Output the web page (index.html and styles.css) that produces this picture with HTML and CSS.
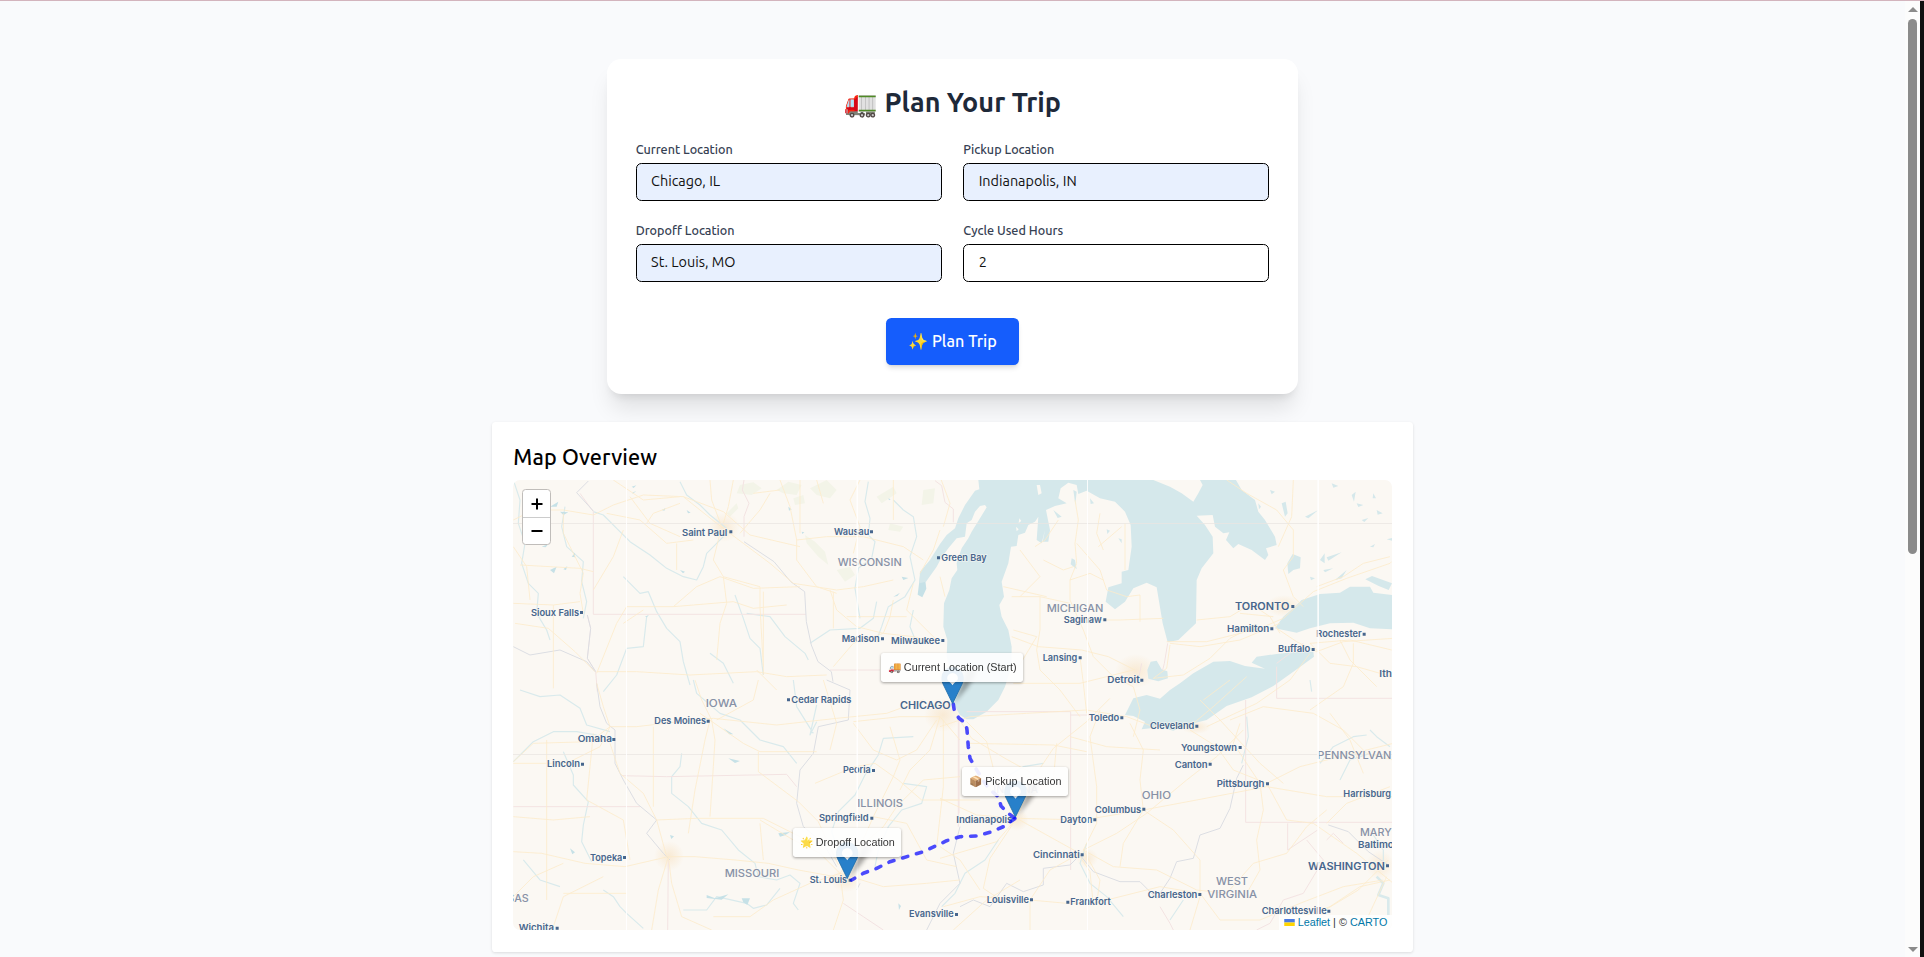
FILE: index.html
```html
<!DOCTYPE html>
<html lang="en">
<head>
<meta charset="utf-8">
<title>Plan Your Trip</title>
<link rel="stylesheet" href="styles.css">
</head>
<body>
<div class="window">
<main class="page">
  <section class="planner">
    <h1 class="planner-title">🚛 Plan Your Trip</h1>
    <form class="fields">
      <label class="field"><span class="field-label">Current Location</span><input class="field-input filled" value="Chicago, IL"></label>
      <label class="field"><span class="field-label">Pickup Location</span><input class="field-input filled" value="Indianapolis, IN"></label>
      <label class="field"><span class="field-label">Dropoff Location</span><input class="field-input filled" value="St. Louis, MO"></label>
      <label class="field"><span class="field-label">Cycle Used Hours</span><input class="field-input" value="2"></label>
    </form>
    <button class="submit" type="button">✨ Plan Trip</button>
  </section>

  <section class="overview">
    <h2 class="overview-title">Map Overview</h2>
    <div class="map">
      <svg class="map-canvas" viewBox="513 480 879 450" preserveAspectRatio="none">
        <defs>
          <symbol id="pin" viewBox="0 0 25 41">
            <path d="M12.500.5C5.600.5.5 6 .5 12.500c0 3 .8 5.200 2 7.500L12.500 40.500 22.500 20c1.200-2.300 2-4.500 2-7.500C24.500 6 19.400.5 12.500.5z" fill="#2880ca" stroke="#2471ad"/>
            <path d="M12.500 6.500a6 6 0 0 1 6 6c0 3-3.500 4-6 7.800-2.500-3.800-6-4.800-6-7.800a6 6 0 0 1 6-6z" fill="#fff"/>
          </symbol>
          <filter id="soft" x="-50%" y="-50%" width="200%" height="200%"><feGaussianBlur stdDeviation="2"/></filter>
          <radialGradient id="sprawl"><stop offset="0" stop-color="#f9ead4"/><stop offset="1" stop-color="#f9ead4" stop-opacity="0"/></radialGradient>
        </defs>
        <rect x="513" y="480" width="879" height="450" fill="#fbf8f3"/>

        <!-- parks -->
        <g transform="translate(480 410) scale(.33333)" class="park">
          <path d="M780 225l40-8 25 18-30 20-45-5zM890 240l35-25 40 10-15 30-40-5zM990 235l50-25 30 30-20 25-40-10zM940 265l30-10 5 25-30 5zM1330 240l35-5-5 45-35 5zM975 375l30 20 30 30 10 40-30-25-35-40zM1070 480l40-10 15 25-30 20zM1190 260l50-30 10 20-45 30z"/>
          <path d="M740 310l30-30 5 15-25 25zM1230 340l40 10-10 15-35-5z"/>
        </g>
        <!-- urban areas -->
        <g class="urban">
          <ellipse cx="724" cy="527" rx="16" ry="15"/><ellipse cx="943" cy="715" rx="19" ry="17"/><ellipse cx="1136" cy="671" rx="21" ry="17"/>
          <ellipse cx="669" cy="856" rx="15" ry="15"/><ellipse cx="846" cy="880" rx="16" ry="12"/><ellipse cx="1017" cy="820" rx="12" ry="11"/><ellipse cx="1284" cy="606" rx="18" ry="11"/>
          <ellipse cx="1380" cy="865" rx="14" ry="15"/><ellipse cx="1196" cy="727" rx="15" ry="7"/><ellipse cx="1087" cy="858" rx="11" ry="10"/>
        </g>

        <!-- rivers and small lakes -->
        <g class="river" transform="translate(480 410) scale(.33333)">
          <path d="M100 210l20 60-5 70 20 60-10 60 20 60 30 30-5 60 30 50 10 30M255 290l-10 60 15 60 50 45-5 60 15 60-10 50"/>
          <path d="M340 305l30 10 40 40 40 40 60 40 50 40 50 25 40 10 20-40 10-40 30-30 20-20M600 215l20 40 40 30 30 30 50 40"/>
          <path d="M430 500l50 50 25-5 25 60 30 50 40 40 10 60 20 70M765 555l25 70 20 60 30 30 10 80M800 610l70 10 45 60 60 50 10 20M1165 215l-10 60 15 50-5 50 20 20-10 50-40 30-10 60 15 90M1240 270l30 30 30 20 10 60-20 60 15 70-30 50-50 30-20 60-15 40"/>
          <path d="M500 620l-10 90-50 5-30 80-40 50M690 730l40 30 30 60M1300 600l-10 50 20 50M1190 575l-10 50-40 30-90 5-60 40"/>
        </g>
        <g class="river" transform="translate(480 680) scale(.33333)">
          <path d="M120 30l60 20 60-5 60 40 20 50 70 20M100 245l60-60 60-30 70 0 60 10M250 215l30 70 0 30 45 50-15 70-5 50 30 60"/>
          <path d="M605 220l-5 40-25 30 0 50 50 40 40 50 60 20 50 60 50 40 10 40 55 10 40-15 30 25-20 60 15 20M610 690l70 0 30-40 90 20 20 15 40-10 40-50"/>
          <path d="M640 0l10 40 70 60 60 20 60 60 70 20 40 50M940 0l10 80 50 80M1300 170l-90 5-15 50-40 60-30 60-50 50-20 60 20 60M1270 310l70 10-15 50-60 20-40 50-30 70-10 50M370 630l30 20 20 30 20 20 50 45M130 540l50 60 60 20M1010 75l-20 90 20-40"/>
        </g>
        <g class="river" transform="translate(940 680) scale(.33333)">
          <path d="M175 480l-40 60-60 40-30 60-40 40M440 490l-20 60 30 60 50 40 50 60M310 250l-60 10-50 30-70 20M920 110l5 60-20 80M1110 0l5 35M1290 150l20 20 40 30M1140 250l40-50 60-30 40-5M1290 450l40 60 0 50M730 660l-40 60M1200 300l30-60 60-20"/>
          <path d="M1310 590l20 20-15 35 30 10 0 50" stroke-width="8"/>
        </g>
        <g class="pond" transform="translate(480 410) scale(.33333)">
          <path d="M210 290l25-15-5 15zM240 305l25 2-15 8zM185 410l20-8-8 10zM210 480l20-10-8 20zM275 440l10-12 0 14zM250 478l12-10-4 12zM455 230l14-4-8 8zM455 250l14-8-8 8zM545 300l12-6-4 8zM620 300l12 8-8 2zM600 480l15 5-6 5zM925 290l10 8-8 4zM965 365l8 2-6 5zM1225 265l7 3-5 3zM495 620l12-6-6 8zM1265 500l20 4-15 6zM1240 560l20-12-8 10zM1320 498l14-2 5 40-12 26-14-8z"/>
        </g>
        <g class="pond" transform="translate(480 680) scale(.33333)">
          <path d="M745 235l35 8-15 6zM895 460l35-4-15 10-15 4zM270 505l15 12-8 6zM570 465l12 4-8 8zM680 645l25 10 40-12-20 16-45-5zM785 655l25 0-8 20-12-8zM1255 670l8 8-6 12zM730 145l30 18-12 0z"/>
        </g>
        <g class="water">
          <path transform="translate(940 470) scale(.33333)" d="M115 30L118 58 105 62 75 105 55 145 45 175 20 195 0 222-30 270-60 305-62 340-42 335-10 290 5 262 25 235 50 205 75 200 80 160 95 150 105 125 120 108 135 105 140 112 120 145 95 185 85 205 65 235 50 280 52 300 35 325 28 360 12 400 10 470 22 510 20 560 35 620 40 700 60 735 80 748 100 748 140 725 175 690 195 650 214 590 215 530 205 480 185 440 178 405 192 380 185 335 205 280 213 230 230 228 235 195 255 188 265 165 285 155 295 140 290 210 305 220 315 180 308 215 325 215 330 180 318 120 345 108 380 100 355 85 362 55 385 38 410 45 415 72 440 62 480 85 525 95 555 125 572 165 575 230 565 300 545 305 545 340 505 352 497 395 525 418 555 395 580 355 620 338 650 352 658 400 668 460 683 517 715 510 768 460 770 330 785 295 820 250 818 200 795 165 770 137 818 135 825 170 850 190 868 187 858 210 880 235 895 222 935 240 975 270 985 255 978 235 1010 225 1005 200 975 150 955 125 945 90 905 60 888 30zM640 30L690 50 725 70 760 95 775 70 788 45 780 30zM290 45l10 0 5 25-10 5zM238 145l6 8-8 6zM228 170l8 8-6 6z" fill-rule="evenodd"/>
          <path transform="translate(940 470) scale(.33333)" d="M632 575L650 572 665 598 682 604 684 625 655 634 625 626 622 600zM555 735L580 685 620 675 660 686 690 660 720 640 760 610 820 575 870 573 915 588 975 596 935 578 950 560 1010 552 1070 545 1120 545 1122 560 1060 605 1000 648 935 682 860 708 800 750 740 765 700 782 660 772 605 778 615 755 580 738zM1005 475L1030 440 1060 415 1085 390 1140 372 1200 368 1230 350 1290 350 1300 368 1356 375 1356 478 1290 475 1240 458 1170 460 1110 475 1070 488zM1045 312L1042 280 1058 252 1082 262 1080 295 1060 300zM1356 340l-60-22-20 10 40 20 30 12z"/>
          <path transform="translate(940 470) scale(.33333)" d="M955 100l8 10-6 8zM990 60l15 5-10 8zM1025 100l12-5 6 35-8 10zM1095 140l40-20-30 25zM1235 75l12-10-5 30zM1250 100l20 5-15 6zM1265 150l20-6-12 12zM1310 120l18 10-15 4zM1140 270l14-20 0 30zM1160 262l45-15-40 25zM1185 330l35-30-15 25zM1150 300l30-5-25 12zM1110 320l15 5-12 6zM400 60l10 5-4 40zM450 85l12 15-10 2zM395 265l10 5 5 28-18-15zM535 205l10 3 0 12zM500 178l10 4-8 10zM340 120l25 20-12 4zM1290 230l15-8-5 10zM1340 208l16-4 0 8zM1175 40l20 8-15 5zM1300 70l8 15-10 0z"/>
        </g>

        <!-- state and country borders -->
        <g class="border" transform="translate(480 410) scale(.33333)">
          <path d="M340 305V613H978M1050 780H1200M792 210l-5 30 20 40-15 40 0 60M1365 212l20 15 10 50 25 20 0 40M300 250l40 55M322 615l10 40-10 90 25 40 5 60"/>
          <path class="bluish" d="M325 213l-35 35 50 55M792 395l90 60 50 60 42 30 5 90 15 70 20 50 40 30 5 30M322 615l10 40-10 90 25 40M100 710l50 25 90-15 80 35 25 30"/>
        </g>
        <g class="border" transform="translate(480 680) scale(.33333)">
          <path d="M100 380H480M425 287L560 290 920 283 950 320M565 540L563 750M1437 120V400M1090 670l60 40 60 40"/>
          <path class="bluish" d="M350 10l10 70 20 50 25 20 0 100 25 50 40 70 60 50-30 40 50 60 20 20M1040 0l70 30-5 90-90 20-15 80-40 50-10 100 20 70 60 50 40 70M1130 630l10-20"/>
        </g>
        <g class="border" transform="translate(940 680) scale(.33333)">
          <path d="M55 110V440M80 95H392V570M392 105H490M917 60V427H1356M1010-40V55H1356M1043 430v80l90-60M660 680l30 50 10 20M683-110l-10 60-5 20M595 0l10-50M1100 480l50 60-60 100-60 20-40 70-40 20"/>
          <path class="bluish" d="M60 440l-20 80 20 90-60 60-40 80M60 680l40-20 50 20 50-70 50 25 60-20 0-50 80-10 30-30 40 50 80 30 60 0 50 50 40-60 20-50 50-10 20-70 60-20 30-60 20-90 20-40M1165 435l60 20 60 60 60 40"/>
          <path d="M1160 480l20-20 30 30M1010-50l80-60"/>
        </g>

        <!-- roads -->
        <g class="road" transform="translate(480 410) scale(.33333)">
          <path d="M100 330l60-30 90 0 90 15 60-30 90-30 120 5 40 15 80 30 80 70 150 35M400 210l90 60 110-10M610 260l100 80 80 60 80 60 70 60 130 20 80-10 90-20M720 370l-20 80 30 50 10 80-20 60-10 110M250 310l0 60 60 120-10 60 10 60M100 580l120 5 80-10M220 585v250M440 590l-30 50-60 150M340 540l60-100 30-80M440 590h140l70-60 70-30 100 35 140-5M580 590l60-5 120-10 60 20 100-10M730 500l110 30 0 60 10 180M900 210l30 80 20 100 0 60 60 80 60 20M950 390l90-10 110 0 120 30 60 40M640 390l-80 10-80-70-100-20M690 210l5 60 30 80M760 210l-15 80-15 50M1240 570l-10 50-20 50-90 30-60 70M1210 670l90 10 80 20M1300 520l-20 80 90 90M1140 210l-30 60 30 80-20 80M1320 490l40-70 20-60M350 785l120 0 160 10 200-10 90 15 120-5M830 780l60 60M345 785l-60-60-80-70-100-15M430 640l60-40M1050 540l20 60 60 50 80 20M1100 620h180M120 465l180 10 40 10"/>
          <path d="M590 400l0 80M450 260l60 80 90 40M820 250l80-10M870 250l-30 50-60 70M1010 210l20 70M100 410l40 60 10 100M500 340l20-30 80-30M850 545v250M960 210v160M1060 545v110M1240 210v120"/>
        </g>
        <g class="road" transform="translate(480 680) scale(.33333)">
          <path d="M100 245l60-55 170-5 60-45 80 0 170-20 60-5 190 20 180-20 150-15 110-40M350 10l20 70 20 60-30 60-100 50-160 0M390 190l30 90 70 60 40 80 30 110M690 120l-15 60-30 150-20 130M645 0l20 60 30 60 10 60-5 80-10 150M835 0l-15 60-110 60M660 100l130 90 50 25 170 0M835 215l0 60 120 90 60 60 60 130M530 420l120-5 200 0 120 60M565 530l80 0 120 10 100 10 90 20 110 20M565 530l-130 30-120-10-130-30-85-5M565 530l-30 100-20 120M565 530l10 80 30 100 90 40M1080 580l-90 30-110 50-70 50-110 0M1080 580l60-80 70-60 40-60 80-80 110-10M1080 580l130 40 130-10 100-10M1080 580l10 80-30 90M1080 580l-60-60-80-40-100-60M1140 500l40-90 60-120 20-50-30-100M1255 300l-70-50-60 10-120 50M1255 300l70 60 110 0M1180 410l100 20 60 110 90 20M1370 120l-60 90-60 30-70-30-60-80M1380 110l-30 100-60 60-30 60M1380 110l-120 0-140 15M1380 110l60 70M1030 0l40 130-20 80M520 140v240M200 180v480M340 160l-20 200 110 60 20 120M100 650l60-60 90-40M220 740l30-90 120-60M100 410l120 10 110-10M440 640h-190M1390 120v200l-20 180M840 430l10 110"/>
        </g>
        <g class="road" transform="translate(940 470) scale(.33333)">
          <path d="M405 90l10 60-10 70 5 60-20 50 0 60 40 90 30 80 60 60 60 30 20 70-20 80M290 500l-70-20M290 500l-60 100M215 500l80 30 130 10 80 20 80 40M410 220l70 80 20 60M480 130l-10 60 20 50M300 380l0 100-10 60M215 380l85 0 90 20M190 350l130 30M440 450l100 0 130-5M390 330l60-20 40 20M420 560l10 80 10 90M290 540l10 60 60 60 60 80M580 600l-160 40-200 0M500 360l60 20 40-5 0 80M680 515l120 0 160-40 70-30 90-80 100-40 130-45 5-5M690 520l90 10 120-20 120-50M690 525l-10 70-40 30 90-10 80-50 60-60 80-40M930 400l60 40 30 50M860 30l60 40 90 50 50 60 0 80-30 40 30 80 30 30M1060 30l-5 110-40 90M1130 350l80-30 60-40 80-20M1010 475l60 40 60 30 80-30 150-10M1110 520l120-10 125 30M1110 550l-60 80-100 70-150 70M1110 520l60 60 80 10 105 30M1200 510l30 60 80 80M1240 520l0 60-30 70-100 70M310 270l60 30 30-10M355 150l-40 60-30 20M545 170l-70 60M240 240l60 80-60 60M0 20l30 80-20 70M0 320l15 60M900 430l100 10M770 450l100-10 50-30M555 160v140"/>
        </g>
        <g class="road" transform="translate(940 680) scale(.33333)">
          <path d="M0 140l90-30 170-10 180-10 120 20 80 30 120-10 60-50 100-90M55 115l40 60 100 60 90 50M230 415l-60-110-30-120-60-60M230 415l50-120 60-90 100-80 70-70M230 415l200 5 180-30 160-30 210-40 180 30 200 0 140-10M230 415l180 100 40 60 10 100M230 415l-80 120-20 90 60 40M230 415l-120-10-110-50M230 415l-60 70-170 50M430 510l40-80 0-110-20-150 30-80M430 510l100-50 90-60 120-100 90-70 80-80M430 510l50 90-10 70-90 0-110-10-150-10-110 30M430 510l90 50 130 10 120 60 90 10 80-90 100-30 60-80 60-50M610 390l-10-90 10-90-40-80M610 390l90 60 80 90 0 110-30 100M610 390l-60 100-10 70M780 60l60 60 120 130 70 60M900 130l-20 60 80 120 10 80-20 90 10 90-40 70M980 310l100-50 280-70M980 310l60 110 80 10 130 90 110 90M780 640l60 80 120 0 120-50 130-50 120-20M780 640l-120-20-200 50M270 660l0 90M270 660l60-90 90-50M0 500l60 40 60 90M870 0l-80 60M870 120l100-40 150 20 90 50 70 70 80 20M1170 100l60 80 40 100M1160 430l60-60 130-50M1060 720l110-40 90-60 90-20M1345 540l-90 90-100 60M1340 590l-70 150M660 210l-160-10-110-30M0 360h120M350 190l-10 110-70 50M750 150l80 50 50 70 100 40M90 190l250 5 100 20M40 750l100-90 100-60"/>
        </g>

        <!-- horizontal tile seams -->
        <path fill="#e9e6e2" opacity=".75" d="M513 523h879v1h-879zM513 754h879v1h-879z"/>

        <!-- place names -->
        <g class="places" transform="translate(480 410) scale(.33333)">
          <text x="606" y="377" textLength="136" lengthAdjust="spacingAndGlyphs">Saint Paul</text><text x="1062" y="374" textLength="106" lengthAdjust="spacingAndGlyphs">Wausau</text><text x="153" y="617" textLength="144" lengthAdjust="spacingAndGlyphs">Sioux Falls</text>
          <text x="1085" y="697" textLength="114" lengthAdjust="spacingAndGlyphs">Madison</text><text x="1233" y="702" textLength="147" lengthAdjust="spacingAndGlyphs">Milwaukee</text><text x="1384" y="453" textLength="136" lengthAdjust="spacingAndGlyphs">Green Bay</text>
          <path d="M748 361h9v9h-9zM1170 361h9v9h-9zM300 603h9v9h-9zM1203 682h9v9h-9zM1384 687h9v9h-9zM1371 439h9v9h-9z"/>
          <text class="state" x="1073" y="468" textLength="192" lengthAdjust="spacingAndGlyphs">WISCONSIN</text>
        </g>
        <g class="places" transform="translate(480 680) scale(.33333)">
          <text x="934" y="70" textLength="180" lengthAdjust="spacingAndGlyphs">Cedar Rapids</text><text x="523" y="132" textLength="155" lengthAdjust="spacingAndGlyphs">Des Moines</text><text x="293" y="187" textLength="103" lengthAdjust="spacingAndGlyphs">Omaha</text><text x="201" y="260" textLength="99" lengthAdjust="spacingAndGlyphs">Lincoln</text>
          <text x="1089" y="279" textLength="83" lengthAdjust="spacingAndGlyphs">Peoria</text><text x="1017" y="423" textLength="149" lengthAdjust="spacingAndGlyphs">Springfield</text><text x="330" y="542" textLength="97" lengthAdjust="spacingAndGlyphs">Topeka</text><text x="989" y="609" textLength="112" lengthAdjust="spacingAndGlyphs">St. Louis</text><text x="1287" y="711" textLength="134" lengthAdjust="spacingAndGlyphs">Evansville</text><text x="116" y="753" textLength="106" lengthAdjust="spacingAndGlyphs">Wichita</text>
          <path d="M921 55h9v9h-9zM680 119h9v9h-9zM397 174h9v9h-9zM303 248h9v9h-9zM1176 267h9v9h-9zM1171 410h9v9h-9zM429 528h9v9h-9zM1106 596h9v9h-9zM1425 699h9v9h-9zM227 740h9v9h-9z"/>
          <text class="city" x="1260" y="88" textLength="152" lengthAdjust="spacingAndGlyphs">CHICAGO</text>
          <text class="state" x="677" y="81" textLength="94" lengthAdjust="spacingAndGlyphs">IOWA</text><text class="state" x="1132" y="381" textLength="137" lengthAdjust="spacingAndGlyphs">ILLINOIS</text><text class="state" x="734" y="591" textLength="164" lengthAdjust="spacingAndGlyphs">MISSOURI</text><text class="state" x="82" y="667" textLength="64" lengthAdjust="spacingAndGlyphs">SAS</text>
        </g>
        <g class="places" transform="translate(940 470) scale(.33333)">
          <text x="371" y="459" textLength="114" lengthAdjust="spacingAndGlyphs">Saginaw</text><text x="308" y="574" textLength="104" lengthAdjust="spacingAndGlyphs">Lansing</text><text x="502" y="640" textLength="97" lengthAdjust="spacingAndGlyphs">Detroit</text><text x="861" y="486" textLength="127" lengthAdjust="spacingAndGlyphs">Hamilton</text><text x="1129" y="502" textLength="136" lengthAdjust="spacingAndGlyphs">Rochester</text><text x="1014" y="547" textLength="97" lengthAdjust="spacingAndGlyphs">Buffalo</text><text x="1318" y="621" textLength="38" lengthAdjust="spacingAndGlyphs">Ith</text>
          <path d="M490 445h9v9h-9zM416 559h9v9h-9zM601 626h9v9h-9zM991 472h9v9h-9zM1268 488h9v9h-9zM1115 534h9v9h-9zM1054 405h9v9h-9z"/>
          <text class="city" x="885" y="420" textLength="163" lengthAdjust="spacingAndGlyphs">TORONTO</text><text class="state" x="320" y="426" textLength="170" lengthAdjust="spacingAndGlyphs">MICHIGAN</text>
        </g>
        <g class="places" transform="translate(940 680) scale(.33333)">
          <text x="446" y="123" textLength="92" lengthAdjust="spacingAndGlyphs">Toledo</text><text x="630" y="147" textLength="133" lengthAdjust="spacingAndGlyphs">Cleveland</text><text x="723" y="213" textLength="168" lengthAdjust="spacingAndGlyphs">Youngstown</text><text x="704" y="263" textLength="99" lengthAdjust="spacingAndGlyphs">Canton</text><text x="830" y="321" textLength="143" lengthAdjust="spacingAndGlyphs">Pittsburgh</text><text x="1210" y="350" textLength="143" lengthAdjust="spacingAndGlyphs">Harrisburg</text><text x="464" y="398" textLength="140" lengthAdjust="spacingAndGlyphs">Columbus</text><text x="361" y="430" textLength="96" lengthAdjust="spacingAndGlyphs">Dayton</text><text x="49" y="429" textLength="168" lengthAdjust="spacingAndGlyphs">Indianapolis</text><text x="279" y="535" textLength="140" lengthAdjust="spacingAndGlyphs">Cincinnati</text><text x="1254" y="504" textLength="136" lengthAdjust="spacingAndGlyphs">Baltimore</text><text x="140" y="668" textLength="127" lengthAdjust="spacingAndGlyphs">Louisville</text><text x="391" y="675" textLength="121" lengthAdjust="spacingAndGlyphs">Frankfort</text><text x="623" y="654" textLength="149" lengthAdjust="spacingAndGlyphs">Charleston</text><text x="965" y="703" textLength="195" lengthAdjust="spacingAndGlyphs">Charlottesville</text>
          <path d="M541 109h9v9h-9zM766 134h9v9h-9zM896 198h9v9h-9zM806 248h9v9h-9zM978 307h9v9h-9zM607 383h9v9h-9zM460 415h9v9h-9zM422 520h9v9h-9zM270 655h9v9h-9zM379 662h9v9h-9zM775 639h9v9h-9zM1162 689h9v9h-9zM1338 553h9v9h-9z"/>
          <text class="city" x="1104" y="569" textLength="231" lengthAdjust="spacingAndGlyphs">WASHINGTON</text><text class="state" x="1132" y="237" textLength="222" lengthAdjust="spacingAndGlyphs">PENNSYLVAN</text><text class="state" x="605" y="357" textLength="88" lengthAdjust="spacingAndGlyphs">OHIO</text><text class="state" x="1260" y="468" textLength="95" lengthAdjust="spacingAndGlyphs">MARY</text><text class="state" x="828" y="615" textLength="96" lengthAdjust="spacingAndGlyphs">WEST</text><text class="state" x="802" y="655" textLength="149" lengthAdjust="spacingAndGlyphs">VIRGINIA</text><text class="state" x="160" y="339" textLength="134" lengthAdjust="spacingAndGlyphs">INDIANA</text>
        </g>
        <!-- vertical tile seams -->
        <path fill="#fff" opacity=".85" d="M626 480h1v450h-1zM856.500 480h1.500v450h-1.500zM1087 480h1v450h-1zM1317.300 480h1.700v450h-1.700z"/>

        <g class="pin-shadow" filter="url(#soft)"><path d="M954 703l7-17 6-17 7 0 2 5-8 13zM1017 816l7-17 6-17 7 0 2 5-8 13zM849 878l7-17 6-17 7 0 2 5-8 13z"/></g>
        <!-- planned route -->
        <g class="route">
          <path d="M953.300 704L954.300 710.700 959 718.300 966 723.300 967 730 968.300 746.700 970 758.300 976.700 770 988.300 788.300 998.300 796.700 1001 806 1008.300 813.300 1015 818.300"/>
          <path d="M1015 818.500L1003.300 826.700 991.700 831.700 976.700 836 960 836.700 946.700 840.700 923.300 851.700 890 861.700 876.700 868.300 863.300 873.300 851.700 880"/>
        </g>
        <use href="#pin" x="941.300" y="667" width="22.500" height="37"/>
        <use href="#pin" x="1004.200" y="780.500" width="22.500" height="37"/>
        <use href="#pin" x="836" y="842" width="22.500" height="37"/>
      </svg>
      <div class="zoom-control"><span class="zoom-button"><svg viewBox="0 0 12 12"><path d="M.5 6h11M6 .5v11"/></svg></span><span class="zoom-button"><svg viewBox="0 0 12 12"><path d="M.5 6h11"/></svg></span></div>
      <div class="tooltip tip-start">🚚 Current Location (Start)</div>
      <div class="tooltip tip-pickup">📦 Pickup Location</div>
      <div class="tooltip tip-dropoff">🌟 Dropoff Location</div>
      <div class="attribution"><svg class="flag" viewBox="0 0 12 8"><path fill="#4c7be1" d="M0 0h12v4H0z"/><path fill="#ffd500" d="M0 4h12v4H0z"/></svg><a>Leaflet</a><span>|</span><span>©</span><a>CARTO</a></div>
    </div>
  </section>
</main>
<aside class="scrollbar"><i class="arrow up"></i><i class="thumb"></i><i class="arrow down"></i></aside>
</div>
</body>
</html>
```

FILE: styles.css
```css
* { box-sizing: border-box; }
body { margin: 0; font-family: Ubuntu, "Noto Sans", sans-serif; background: #f9fafc; overflow: hidden; }
.window { display: flex; height: 957px; border-top: 1px solid #d3b4bd; }
.page { flex: 1; display: flex; flex-direction: column; align-items: center; gap: 28px; padding-top: 58px; height: 956px; overflow: hidden; }

.planner { flex: none; width: 691.2px; height: 335px; padding: 28.8px; border-radius: 14.4px; background: #fff; box-shadow: 0 18px 22px -4px rgba(0,0,0,.1), 0 7px 9px -5px rgba(0,0,0,.1); display: flex; flex-direction: column; align-items: center; }
.planner-title { margin: -2px 0 0; height: 32px; line-height: 32px; font-size: 27px; font-weight: 600; color: #1e2939; white-space: nowrap; }
.fields { width: 100%; display: grid; grid-template-columns: 1fr 1fr; column-gap: 21.6px; row-gap: 20.4px; margin-top: 22.4px; }
.field { display: flex; flex-direction: column; gap: 4.6px; min-width: 0; }
.field-label { font-size: 12.6px; line-height: 18px; height: 18px; font-weight: 500; color: #364153; }
.field-input { width: 100%; height: 38px; padding: 0 14.4px 2px; border: 1px solid #000; border-radius: 5.4px; font: 14.4px Ubuntu, "Noto Sans", sans-serif; color: #111; background: #fff; outline: 0; }
.field-input.filled { background: #e8f0fe; }
.submit { margin-top: 35.8px; width: 133px; height: 47px; padding: 0; border: 0; border-radius: 5.4px; background: #155dfc; color: #fff; font: 500 16.2px Ubuntu, "Noto Sans", sans-serif; white-space: nowrap; box-shadow: 0 4px 5px -1px rgba(0,0,0,.12), 0 2px 3px -2px rgba(0,0,0,.12); }

.overview { flex: none; width: 921.6px; height: 530px; padding: 21.6px; border-radius: 3.6px; background: #fff; box-shadow: 0 1px 3px rgba(0,0,0,.12); }
.overview-title { margin: 0; height: 36px; line-height: 26px; font-size: 21.6px; font-weight: 500; letter-spacing: .12px; color: #000; }
.map { position: relative; width: 879px; height: 450px; border-radius: 7px; overflow: hidden; font-family: "Liberation Sans", Arial, sans-serif; }
.map-canvas { display: block; width: 100%; height: 100%; }
.water { fill: #d5e8eb; }
.park { fill: #f3f4e8; }
.urban { fill: url(#sprawl); }
.river { fill: none; stroke: #d9eaec; stroke-width: 3.5; stroke-linejoin: round; }
.pond { fill: #c6e1e7; }
.border { fill: none; stroke: #f3e3e2; stroke-width: 3; stroke-linejoin: round; }
.border .bluish { stroke: #dcdee3; }
.road { fill: none; stroke: #fdebca; stroke-width: 3; stroke-linejoin: round; opacity: .8; }
.places { fill: #47668d; font-family: Inter, sans-serif; font-size: 28px; font-weight: 600; }
.places text { paint-order: stroke; stroke: #fbf8f3; stroke-width: 4px; stroke-opacity: .7; }
.places .city { font-size: 30px; }
.places .state { font-size: 31px; font-weight: 500; fill: #8791a6; }
.route { fill: none; stroke: #00f; stroke-opacity: .7; stroke-width: 3.6; stroke-linecap: round; stroke-linejoin: round; stroke-dasharray: 5.4 9; }
.pin-shadow { fill: #000; opacity: .33; }

.zoom-control { position: absolute; left: 9px; top: 9px; width: 29px; height: 56px; border: 1px solid #c0bdba; border-radius: 3.6px; background: #fff; overflow: hidden; }
.zoom-button { display: flex; align-items: center; justify-content: center; height: 27px; }
.zoom-button:first-child { padding-top: 2px; }
.zoom-button + .zoom-button { border-top: 1px solid #ccc; }
.zoom-button svg { width: 12px; height: 12px; fill: none; stroke: #000; stroke-width: 2; }
.tooltip { position: absolute; height: 29px; border-radius: 2.7px; background: #fff; opacity: .9; box-shadow: 0 1px 3px rgba(0,0,0,.4); color: #222; font-size: 10.8px; line-height: 29px; text-align: center; white-space: nowrap; }
.tip-start { left: 368px; top: 173px; width: 142px; }
.tip-pickup { left: 449px; top: 287px; width: 106px; }
.tip-dropoff { left: 280px; top: 348px; width: 108px; }
.attribution { position: absolute; right: 0; bottom: 0; height: 15px; padding: 0 5px; display: flex; align-items: center; gap: 3px; background: rgba(255,255,255,.8); font-size: 10.8px; color: #333; }
.attribution a { color: #0078a8; }
.flag { width: 11px; height: 7px; }

.scrollbar { width: 19px; height: 956px; display: flex; flex-direction: column; align-items: center; padding: 6px 0 5px; background: #fcfcfc; border-right: 4px solid #101010; }
.arrow { width: 0; height: 0; border: 5px solid transparent; flex: none; }
.arrow.up { border-top: 0; border-bottom-color: #8b8b8b; margin-bottom: 7px; }
.arrow.down { border-bottom: 0; border-top-color: #8b8b8b; margin-top: auto; }
.thumb { width: 9px; height: 535px; border-radius: 5px; background: #8b8b8b; }
```
